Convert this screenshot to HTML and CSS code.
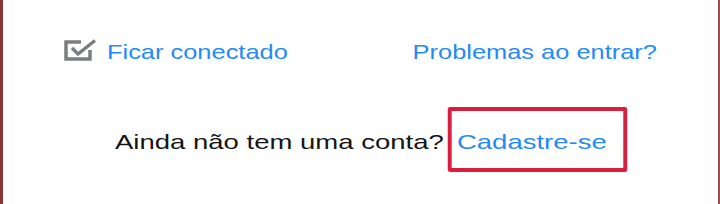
FILE: index.html
```html
<!DOCTYPE html>
<html lang="pt-BR">
<head>
    <meta charset="UTF-8">
    <title>Entrar</title>
    <link rel="stylesheet" href="styles.css">
</head>
<body>
    <div class="frame">
        <div class="options">
            <label class="remember">
                <svg class="check-icon" width="34" height="22" viewBox="0 0 34 22">
                    <path d="M18 3 H3 V20 H27 V11" fill="none" stroke="#7b7d80" stroke-width="3.5"/>
                    <path d="M9 9 L15 15 L32 1.5" fill="none" stroke="#7b7d80" stroke-width="3.5"/>
                </svg>
                <a href="#" class="link stretch-left">Ficar conectado</a>
            </label>
            <a href="#" class="link stretch-right">Problemas ao entrar?</a>
        </div>

        <div class="signup">
            <span class="question">Ainda não tem uma conta?</span>
            <span class="highlight"><a href="#" class="link">Cadastre-se</a></span>
        </div>
    </div>
</body>
</html>
```

FILE: styles.css
```css
body {
    margin: 0;
    background-color: #fff;
    font-family: 'Liberation Sans', Arial, sans-serif;
}

.frame {
    width: 720px;
    height: 204px;
    box-sizing: border-box;
    border-left: 3px solid #8b3636;
    border-right: 2px solid #9a4b52;
    overflow: hidden;
}

.options {
    display: flex;
    justify-content: space-between;
    align-items: flex-start;
    padding: 40px 61px 0 60px;
    font-size: 21px;
    line-height: 24px;
}

.remember {
    display: flex;
    align-items: flex-start;
}

.check-icon {
    margin-top: -1px;
    margin-right: 10px;
}

.link {
    color: #2589f6;
    text-decoration: none;
}

.stretch-left,
.stretch-right {
    display: inline-block;
    transform: scaleX(1.21);
}

.stretch-left {
    transform-origin: left center;
}

.stretch-right {
    transform-origin: right center;
}

.signup {
    display: flex;
    align-items: baseline;
    margin: 43px 0 0 112px;
    font-size: 21px;
    line-height: 24px;
    color: #151515;
    transform: scaleX(1.31);
    transform-origin: left top;
}

.question {
    margin-right: 3px;
}

.highlight {
    display: inline-block;
    padding: 19px 13px 14px 4px;
    border: 4px solid #dc1e3e;
    border-left-width: 3px;
    border-right-width: 3px;
    border-radius: 2px;
}
```
